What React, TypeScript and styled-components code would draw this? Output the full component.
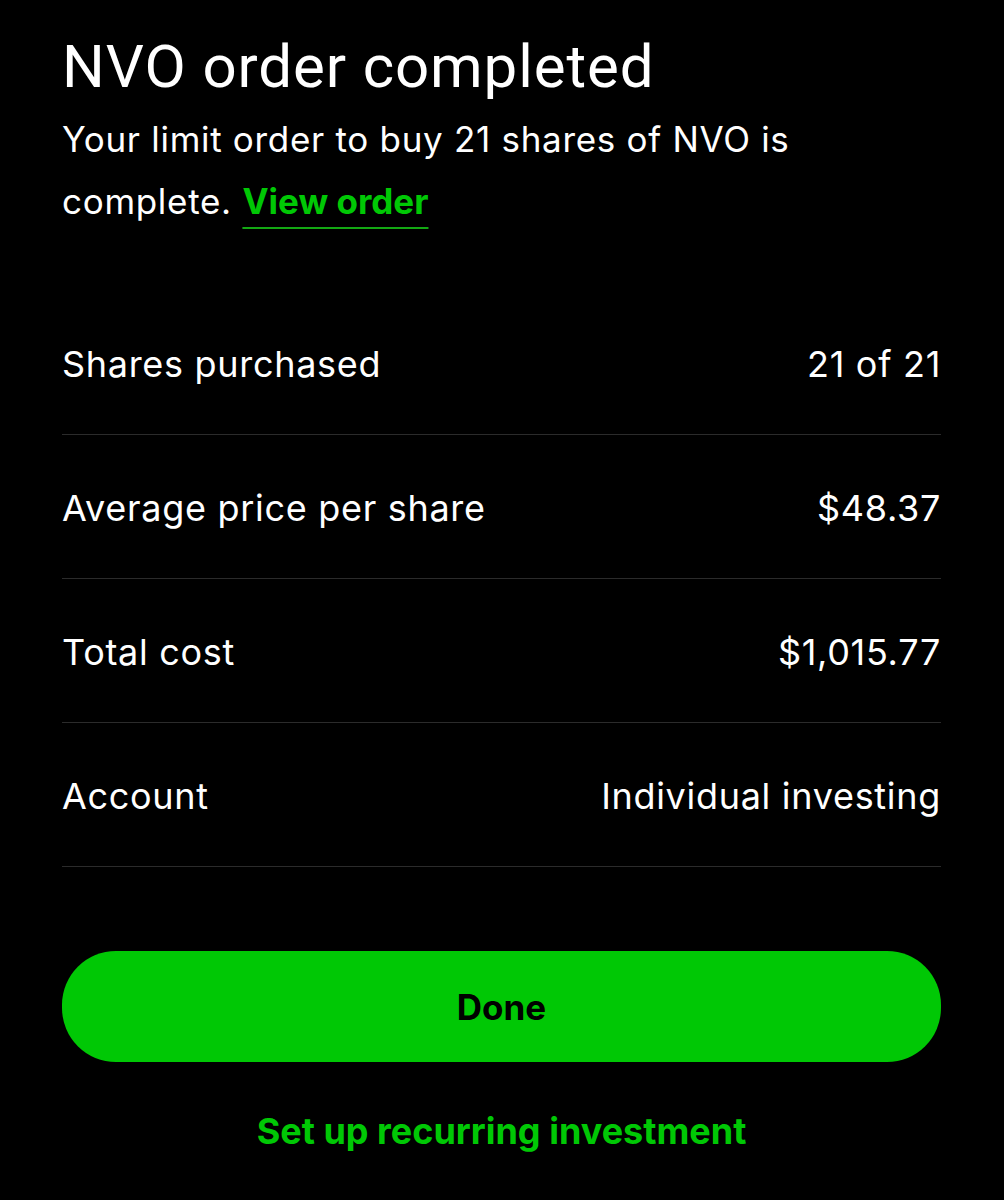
import React from "react";
import styled, { createGlobalStyle } from "styled-components";

const GlobalStyle = createGlobalStyle`
  html, body {
    margin: 0;
    padding: 0;
    background: #000;
  }
  body {
    font-family: Inter, Roboto, "Liberation Sans", Arial, sans-serif;
    color: #fff;
    -webkit-font-smoothing: antialiased;
  }
`;

const Screen = styled.main`
  min-height: 1200px;
  box-sizing: border-box;
  background: #000;
  padding: 32px 63px 0 62px;
  display: flex;
  flex-direction: column;
`;

const Title = styled.h1`
  margin: 0;
  font-family: Roboto, "Liberation Sans", Arial, sans-serif;
  font-size: 60px;
  line-height: 70px;
  font-weight: 400;
  letter-spacing: 0.9px;
  color: #fff;
`;

const Message = styled.p`
  margin: 6px 0 0;
  max-width: 840px;
  font-size: 35px;
  line-height: 62px;
  font-weight: 400;
  letter-spacing: 0.7px;
  color: #fff;
`;

const GreenLink = styled.a`
  color: #00c805;
  font-weight: 700;
  letter-spacing: 0;
  text-decoration: underline;
  text-decoration-color: #13a813;
  text-decoration-thickness: 2px;
  text-underline-offset: 13px;
  cursor: pointer;
`;

const DetailList = styled.dl`
  margin: 59px 0 0;
  padding: 0;
  display: flex;
  flex-direction: column;
`;

const DetailRow = styled.div`
  display: flex;
  justify-content: space-between;
  align-items: center;
  padding: 52px 0 48px;
  border-bottom: 1px solid #2b2b2b;
  font-size: 36px;
  line-height: 43px;
  letter-spacing: 0.7px;
`;

const Label = styled.dt`
  margin: 0;
  color: #fff;
`;

const Value = styled.dd`
  margin: 0;
  color: #fff;
  text-align: right;
`;

const DoneButton = styled.button`
  margin-top: 84px;
  height: 111px;
  width: 100%;
  border: none;
  border-radius: 54px;
  background: #00c805;
  color: #000;
  font-family: inherit;
  font-size: 35px;
  font-weight: 700;
  cursor: pointer;
`;

const SecondaryAction = styled.button`
  margin-top: 48px;
  align-self: center;
  background: none;
  border: none;
  padding: 0;
  color: #00c805;
  font-family: inherit;
  font-size: 36px;
  line-height: 43px;
  font-weight: 700;
  cursor: pointer;
`;

const details: { label: string; value: string }[] = [
  { label: "Shares purchased", value: "21 of 21" },
  { label: "Average price per share", value: "$48.37" },
  { label: "Total cost", value: "$1,015.77" },
  { label: "Account", value: "Individual investing" },
];

export default function App() {
  return (
    <>
      <GlobalStyle />
      <Screen>
        <Title>NVO order completed</Title>
        <Message>
          Your limit order to buy 21 shares of NVO is complete.{" "}
          <GreenLink>View order</GreenLink>
        </Message>
        <DetailList>
          {details.map((d) => (
            <DetailRow key={d.label}>
              <Label>{d.label}</Label>
              <Value>{d.value}</Value>
            </DetailRow>
          ))}
        </DetailList>
        <DoneButton>Done</DoneButton>
        <SecondaryAction>Set up recurring investment</SecondaryAction>
      </Screen>
    </>
  );
}
